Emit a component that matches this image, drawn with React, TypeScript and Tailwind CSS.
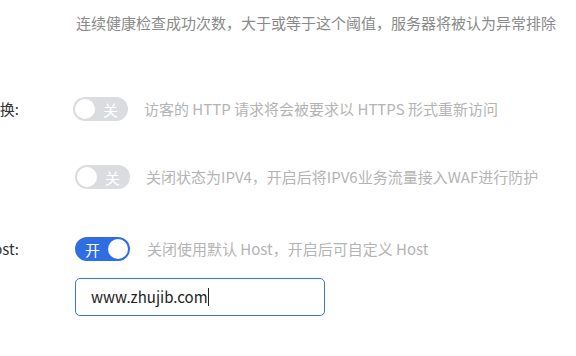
const font = { fontFamily: '"Noto Sans CJK SC", "Noto Sans", sans-serif' };

type ToggleProps = { on: boolean };

const Toggle = ({ on }: ToggleProps) => {
  if (on) {
    return (
      <div className="flex h-6 w-[55px] shrink-0 items-center justify-between rounded-full bg-[#2f6de3] pl-[10px] pr-[2px]">
        <span className="text-[15px] leading-none text-white">开</span>
        <span className="h-5 w-5 rounded-full bg-white" />
      </div>
    );
  }
  return (
    <div className="flex h-6 w-[55px] shrink-0 items-center justify-between rounded-full bg-[#dbdcdf] pl-[2px] pr-[10px]">
      <span className="h-5 w-5 rounded-full bg-white" />
      <span className="text-[15px] leading-none text-white">关</span>
    </div>
  );
};

const Row = ({ label, children }: { label?: string; children: React.ReactNode }) => (
  <div className="flex items-center">
    <div className="w-[157px] shrink-0 whitespace-nowrap text-right text-[15px] text-[#333]">{label}</div>
    <div className="flex items-center pl-[54px]">{children}</div>
  </div>
);

export default function App() {
  return (
    <div className="relative h-[356px] w-[576px] overflow-hidden bg-white" style={font}>
      <div className="ml-[-138px] flex flex-col pt-[11px]">
        <div className="flex">
          <div className="w-[160px] shrink-0" />
          <p className="whitespace-nowrap pl-[54px] text-[15px] leading-6 text-[#8a8a8a]">
            连续健康检查成功次数，大于或等于这个阈值，服务器将被认为异常排除
          </p>
        </div>

        <div className="mt-[62px]">
          <Row label="强制HTTPS转换:">
            <Toggle on={false} />
            <span className="ml-4 whitespace-nowrap text-[15px] text-[#b4b4b4]">
              访客的 HTTP 请求将会被要求以 HTTPS 形式重新访问
            </span>
          </Row>
        </div>

        <div className="mt-[44px]">
          <Row>
            <div className="ml-[2px] flex items-center">
              <Toggle on={false} />
              <span className="ml-4 whitespace-nowrap text-[15px] text-[#b4b4b4]">
                关闭状态为IPV4，开启后将IPV6业务流量接入WAF进行防护
              </span>
            </div>
          </Row>
        </div>

        <div className="mt-[48px]">
          <Row label="自定义回源Host:">
            <div className="ml-[2px] flex items-center">
              <Toggle on />
              <span className="ml-[17px] whitespace-nowrap text-[15px] text-[#b4b4b4]">
                关闭使用默认 Host，开启后可自定义 Host
              </span>
            </div>
          </Row>
        </div>

        <div className="mt-[17px]">
          <Row>
            <div className="ml-[2px] flex h-[38px] w-[250px] items-center rounded-[5px] border border-[#3d73dc] pl-[15px]">
              <span className="text-[15px] text-[#222]">www.zhujib.com</span>
              <span className="h-[18px] w-px bg-[#222]" />
            </div>
          </Row>
        </div>
      </div>
    </div>
  );
}
